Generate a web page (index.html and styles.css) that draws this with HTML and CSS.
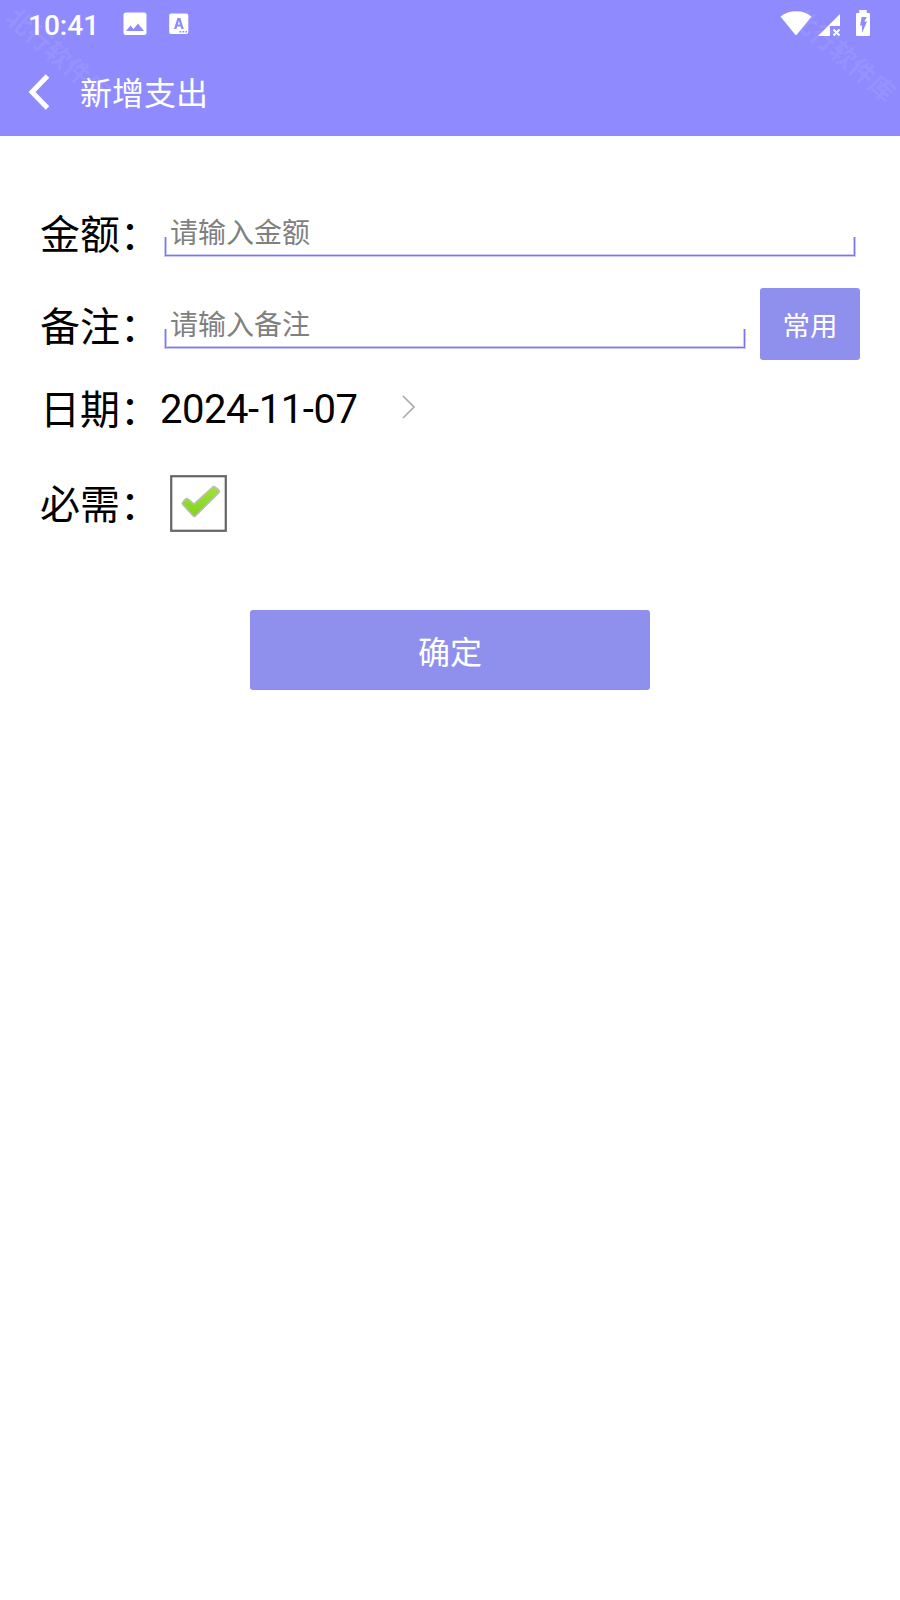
FILE: index.html
```html
<!DOCTYPE html>
<html lang="zh-CN">
<head>
<meta charset="utf-8">
<title>新增支出</title>
<link rel="stylesheet" href="styles.css">
</head>
<body>
<div class="screen">
  <header class="header">
    <span class="watermark watermark-left">北行软件库</span>
    <span class="watermark watermark-right">北行软件库</span>
    <div class="status">
      <span class="clock">10:41</span>
      <svg class="icon-picture" width="24" height="24" viewBox="0 0 24 24"><path fill="#fff" fill-rule="evenodd" d="M3 .5h18a2.500 2.500 0 0 1 2.500 2.500v17.500a2.500 2.500 0 0 1-2.500 2.500H3a2.500 2.500 0 0 1-2.500-2.500V3A2.500 2.500 0 0 1 3 .5zM3 19h18l-6-7.500-4.500 5.500-3-3.500z"/></svg>
      <svg class="icon-letter" width="20" height="22" viewBox="0 0 20 22"><path fill="#fff" fill-rule="evenodd" d="M2 .5h15.500a1.800 1.800 0 0 1 1.800 1.800v17a1.800 1.800 0 0 1-1.800 1.800H2A1.800 1.800 0 0 1 .2 19.300v-17A1.800 1.800 0 0 1 2 .5zM8.500 5 5 16h2.400l.8-2.500h3.400l.8 2.500h2.400L11.300 5zM9.900 8l1.100 3.500H8.800zM10.500 18v1.500h1.700V18zM13.500 18v1.500h1.700V18zM16.500 18v1.500H18V18z"/></svg>
      <span class="spacer"></span>
      <svg class="icon-wifi" width="32" height="25" viewBox="0 0 32 25"><path fill="#fff" d="M.5 5.500Q7 .3 16 .3t15.500 5.200L16.500 24h-1z"/></svg>
      <svg class="icon-signal" width="22" height="23" viewBox="0 0 22 23"><path fill="#fff" d="M22 0v12H12v10H0z"/><path d="m15.500 15.500 6 6m0-6-6 6" stroke="#fff" stroke-width="2"/></svg>
      <svg class="icon-battery" width="14" height="26" viewBox="0 0 14 26"><path fill="#fff" fill-rule="evenodd" d="M3.300 0h7.400v3H13q1 0 1 1v21q0 1-1 1H1q-1 0-1-1V4q0-1 1-1h2.300zM5.700 7 4 15.500h2V23l5-11.500H8.300L10.800 7z"/></svg>
    </div>
    <div class="titlebar">
      <svg width="24" height="36" viewBox="0 0 24 36"><path d="M19.500 2 4 18l15.500 16" fill="none" stroke="#fff" stroke-width="5"/></svg>
      <h1 class="title">新增支出</h1>
    </div>
  </header>
  <main class="form">
    <div class="row row-amount">
      <label class="label">金额：</label>
      <div class="field"><span class="hint">请输入金额</span></div>
    </div>
    <div class="row row-note">
      <label class="label">备注：</label>
      <div class="field"><span class="hint">请输入备注</span></div>
      <button class="btn btn-common">常用</button>
    </div>
    <div class="row row-date">
      <label class="label">日期：</label>
      <span class="date">2024-11-07</span>
      <svg class="chevron" width="16" height="24" viewBox="0 0 16 24"><path d="m2 1 11 11L2 23" fill="none" stroke="#aaa" stroke-width="1.700"/></svg>
    </div>
    <div class="row row-need">
      <label class="label">必需：</label>
      <svg class="check" width="57" height="57" viewBox="0 0 56 56">
        <defs><linearGradient id="green" x1="0" y1="0" x2="0" y2="1"><stop offset="0" stop-color="#a2e238"/><stop offset="1" stop-color="#80d51b"/></linearGradient></defs>
        <rect x="1.200" y="1.200" width="53.600" height="53.600" fill="#fff" stroke="#666" stroke-width="2.200"/>
        <path d="M12 28.500q-.5-1.500 4.200-5.500 1-.5 7.300 5.500L42.500 11.300q1.500-.8 6 4.200.4 1-1 2.500L24.800 40.500q-1 .8-2-.3z" fill="url(#green)" stroke="#bdbdbd" stroke-width="1.500" stroke-linejoin="round"/>
      </svg>
    </div>
    <button class="btn btn-submit">确定</button>
  </main>
</div>
</body>
</html>
```
FILE: styles.css
```css
* { box-sizing: border-box; }
body {
  margin: 0;
  background: #fff;
  font-family: Roboto, "Noto Sans CJK SC", sans-serif;
}
.screen { width: 900px; height: 1600px; overflow: hidden; background: #fff; }
.header {
  position: relative;
  height: 136px;
  overflow: hidden;
  background: #8f8bff;
  color: #fff;
}
.watermark {
  position: absolute;
  top: 42px;
  width: 128px;
  line-height: 26px;
  text-align: center;
  font-size: 25.5px;
  font-weight: 700;
  color: rgba(255, 255, 255, 0.07);
  transform: rotate(41deg);
  white-space: nowrap;
}
.watermark-left { left: -6px; }
.watermark-right { left: 779px; }
.status {
  display: flex;
  align-items: flex-start;
  height: 50px;
  padding: 0 30px 0 28px;
}
.clock { width: 95px; font-size: 28px; font-weight: 500; line-height: 52px; }
.icon-picture { margin-top: 12px; }
.icon-letter { margin: 13px 0 0 22px; }
.spacer { flex: 1; }
.icon-wifi { margin: 11px 6px 0 0; }
.icon-signal { margin: 14px 16px 0 0; }
.icon-battery { margin-top: 10px; }
.titlebar { display: flex; align-items: center; height: 84px; padding-left: 28px; }
.title { margin: 0; padding: 4px 0 0 28px; font-size: 32px; font-weight: 400; line-height: 48px; }
.form { display: flex; flex-direction: column; padding: 64px 40px 0; }
.row { display: flex; align-items: center; height: 72px; }
.row-note { align-items: flex-start; height: 76px; margin-top: 16px; }
.row-note .label { padding-top: 10px; }
.row-note .field { margin-top: 4px; }
.row-date { margin-top: 8px; }
.row-date .label { padding-top: 5px; }
.row-need { margin-top: 23px; }
.row-need .label { padding-top: 6px; }
.label { width: 120px; font-size: 40px; line-height: 60px; color: #000; white-space: nowrap; }
.field {
  display: flex;
  align-items: center;
  flex: 1;
  height: 72px;
  margin: 0 4px;
  padding: 0 6px 4px;
  background:
    linear-gradient(#7b73f3, #7b73f3) 1px 55px / calc(100% - 2px) 1px no-repeat,
    linear-gradient(#7b73f3, #7b73f3) 1px 37px / 1px 19px no-repeat,
    linear-gradient(#7b73f3, #7b73f3) calc(100% - 1px) 37px / 1px 19px no-repeat,
    linear-gradient(#cbc8fb, #cbc8fb) 0 54px / 100% 3px no-repeat,
    linear-gradient(#cbc8fb, #cbc8fb) 0 37px / 3px 19px no-repeat,
    linear-gradient(#cbc8fb, #cbc8fb) 100% 37px / 3px 19px no-repeat;
}
.hint { font-size: 28px; line-height: 42px; color: #808080; }
.btn {
  border: 0;
  padding: 0;
  border-radius: 3px;
  background: #8f90ee;
  color: #fff;
  font-family: inherit;
}
.btn-common { width: 100px; height: 72px; margin-left: 10px; padding-bottom: 1px; font-size: 27.5px; }
.date { width: 241px; padding-top: 4px; font-size: 40px; letter-spacing: -0.45px; line-height: 60px; color: #000; }
.chevron { margin-bottom: 2px; }
.check { margin-left: 10px; }
.btn-submit { align-self: center; width: 400px; height: 80px; margin-top: 71px; font-size: 32px; }
```
